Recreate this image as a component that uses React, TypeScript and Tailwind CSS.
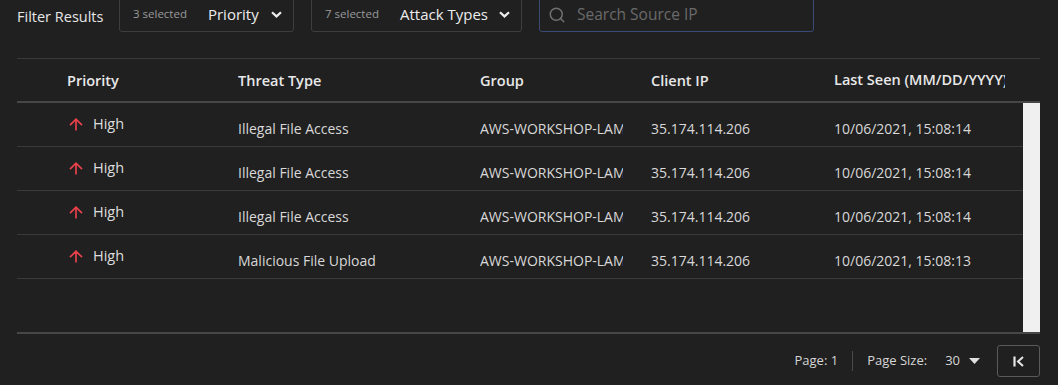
import { Search } from "lucide-react"

const rows = [
  { threat: "Illegal File Access", seen: "10/06/2021, 15:08:14" },
  { threat: "Illegal File Access", seen: "10/06/2021, 15:08:14" },
  { threat: "Illegal File Access", seen: "10/06/2021, 15:08:14" },
  { threat: "Malicious File Upload", seen: "10/06/2021, 15:08:13" },
]

function UpArrow() {
  return (
    <svg width="14" height="13" viewBox="0 0 14 13" fill="none" className="shrink-0">
      <path d="M7 12.5V1.2M1 7.2L7 1.2L13 7.2" stroke="#e8414c" strokeWidth="1.7" />
    </svg>
  )
}

function FilterBox({ count, label, width }: { count: string; label: string; width: string }) {
  return (
    <div
      className={`flex h-full shrink-0 items-center whitespace-nowrap rounded-[3px] border border-[#3e3e3e] pl-[13px] pr-[11px] ${width}`}
    >
      <span className="-mt-[2px] text-[11.5px] text-[#9a9a9a]">{count}</span>
      <span className="ml-[21px] text-[15px] text-[#ececec]">{label}</span>
      <svg width="11" height="7" viewBox="0 0 11 7" fill="none" className="ml-auto">
        <path d="M1 1.2L5.5 5.4L10 1.2" stroke="#ececec" strokeWidth="2.2" />
      </svg>
    </div>
  )
}

export default function App() {
  return (
    <div className="h-[385px] w-[1058px] overflow-hidden bg-[#202020] font-['Open_Sans',sans-serif] text-[#d8d8d8]">
      {/* filter bar */}
      <div className="-mt-[3px] flex h-[35px] items-center pl-[17px]">
        <span className="mt-[4px] w-[102px] shrink-0 whitespace-nowrap text-[14.5px] text-[#e6e6e6]">Filter Results</span>
        <FilterBox count="3 selected" label="Priority" width="w-[175px]" />
        <div className="w-[17px] shrink-0" />
        <FilterBox count="7 selected" label="Attack Types" width="w-[211px]" />
        <div className="w-[17px] shrink-0" />
        <div className="flex h-full w-[275px] shrink-0 items-center rounded-[3px] border border-[#3b4a74] pl-[8px]">
          <Search className="h-[18px] w-[18px] text-[#707070]" strokeWidth={2} />
          <span className="ml-[11px] whitespace-nowrap text-[15.5px] text-[#6a6a6a]">Search Source IP</span>
        </div>
      </div>

      {/* table */}
      <div className="ml-[17px] mt-[26px] w-[1023px] border-t border-[#3a3a3a]">
        <div className="grid h-[44px] grid-cols-[221px_242px_171px_183px_171px] items-center border-b-2 border-[#474747] text-[14.5px] font-semibold text-[#e8e8e8]">
          <div className="pl-[50px] pt-[2px]">Priority</div>
          <div className="pt-[2px]">Threat Type</div>
          <div className="pt-[2px]">Group</div>
          <div className="pt-[2px]">Client IP</div>
          <div className="overflow-hidden whitespace-nowrap">Last Seen (MM/DD/YYYY)</div>
        </div>

        <div className="flex h-[229px]">
          <div className="w-[1006px]">
            {rows.map((r, i) => (
              <div
                key={i}
                className="grid h-[44px] grid-cols-[221px_242px_171px_183px_1fr] border-b border-[#3a3a3a] text-[14px]"
              >
                <div className="flex items-center pb-[1px] pl-[52px]">
                  <UpArrow />
                  <span className="ml-[10px] text-[14.5px] text-[#dedede]">High</span>
                </div>
                <div className="flex items-center pt-[7px]">{r.threat}</div>
                <div className="flex items-center pt-[7px]">
                  <div className="w-[143px] overflow-hidden whitespace-nowrap">AWS-WORKSHOP-LAMBDA</div>
                </div>
                <div className="flex items-center pt-[7px]">35.174.114.206</div>
                <div className="flex items-center whitespace-nowrap pt-[7px]">{r.seen}</div>
              </div>
            ))}
          </div>
          <div className="w-[17px] bg-[#f0f0f0]" />
        </div>

        <div className="border-t-2 border-[#474747]" />

        {/* pagination */}
        <div className="mt-[11px] flex items-center justify-end text-[13px] text-[#d6d6d6]">
          <span>Page: 1</span>
          <div className="mx-[14px] h-[20px] w-px bg-[#4a4a4a]" />
          <span>Page Size:</span>
          <span className="ml-[18px]">30</span>
          <svg width="11" height="6" viewBox="0 0 11 6" className="ml-[9px]">
            <path d="M0 0H11L5.5 6Z" fill="#e0e0e0" />
          </svg>
          <div className="ml-[17px] flex h-[32px] w-[43px] items-center justify-center rounded-[3px] border border-[#5a5a5a]">
            <svg width="11" height="11" viewBox="0 0 11 11" fill="none">
              <path d="M1.5 0.5V10.5" stroke="#e6e6e6" strokeWidth="2.2" />
              <path d="M10 1L5 5.5L10 10" stroke="#e6e6e6" strokeWidth="2" />
            </svg>
          </div>
        </div>
      </div>
    </div>
  )
}
